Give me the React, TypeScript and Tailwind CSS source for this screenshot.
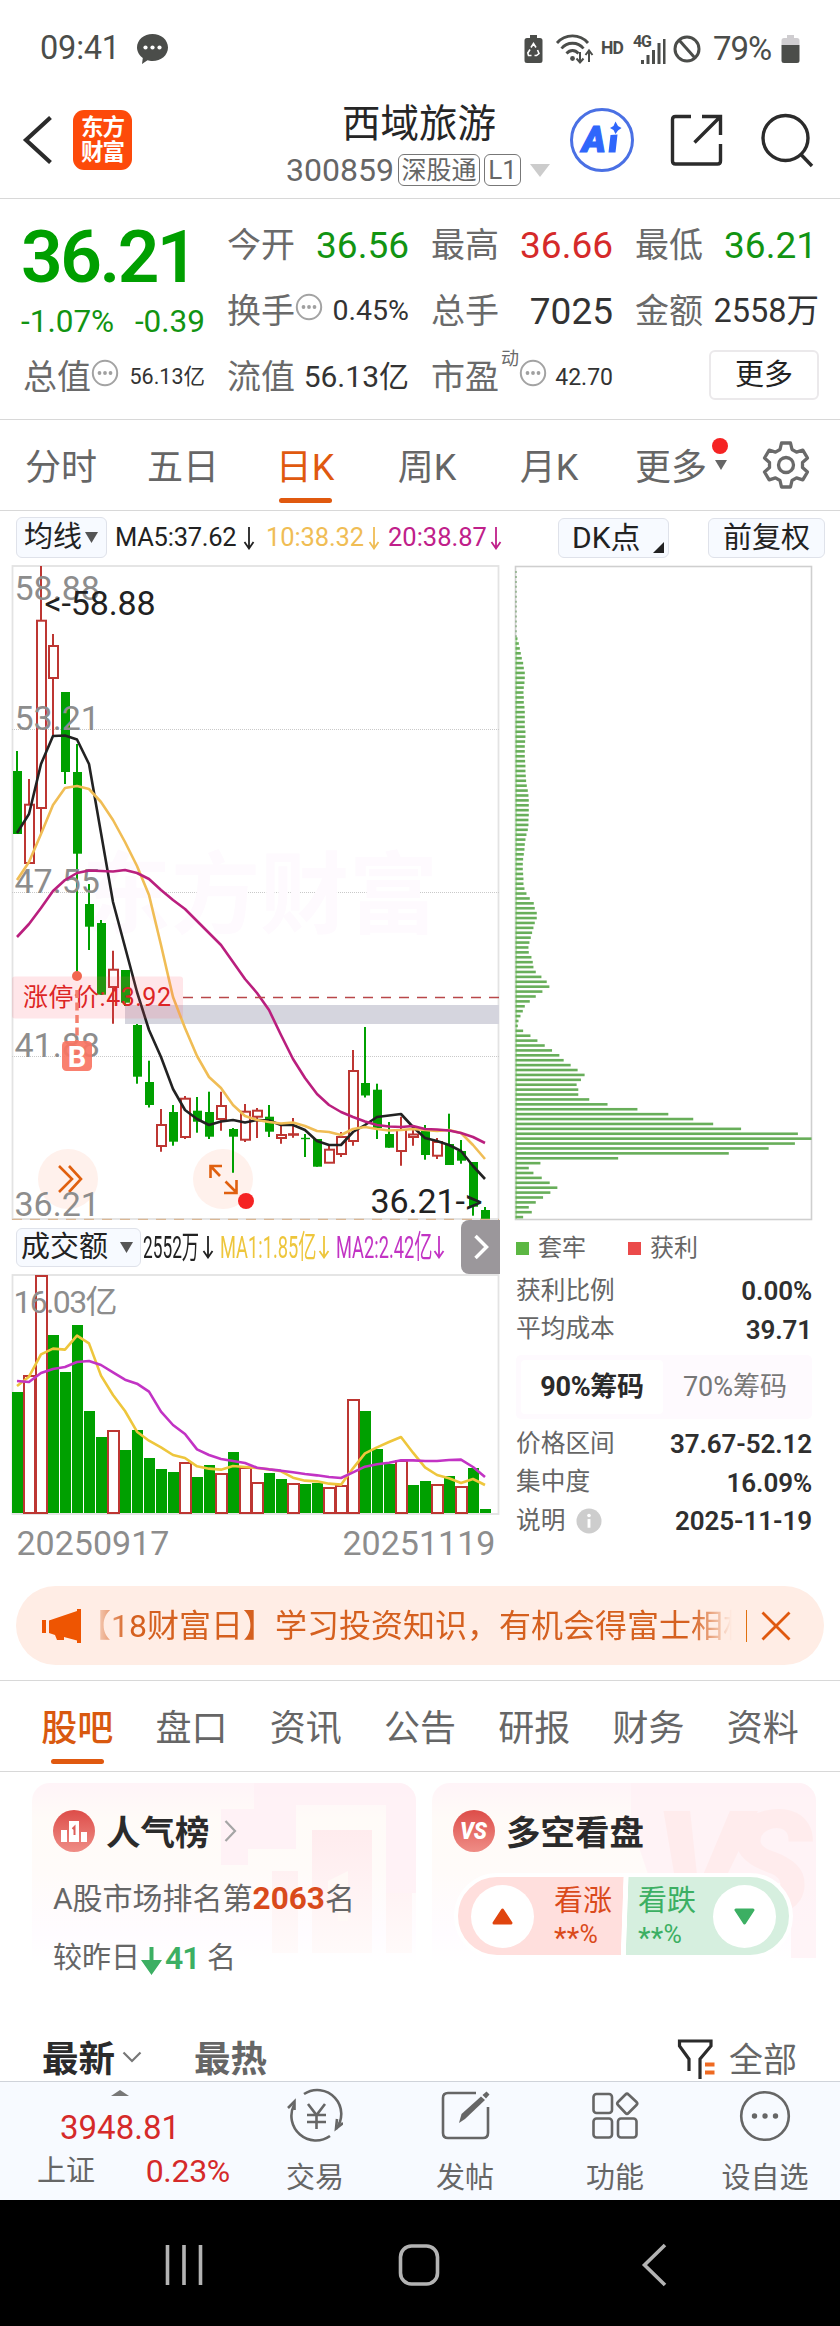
import React from "react";

type Candle = [kind: "g" | "r", high: number, top: number, bottom: number, low: number];

const X0 = 17;
const STEP = 12;

const candles: Candle[] = [
  ["g", 751, 771, 834, 834], ["r", 779, 804.7, 863, 864], ["r", 566, 620.7, 808, 833], ["r", 634, 646, 678, 735],
  ["g", 692, 692, 772, 784], ["g", 744, 772, 853.7, 976], ["g", 884, 904, 926.7, 950], ["g", 920, 923, 994.7, 994.7],
  ["r", 950.7, 969.7, 987, 1023.7], ["g", 970, 970, 1002.7, 1006], ["g", 1024, 1025, 1076.7, 1083.7], ["g", 1060.7, 1082, 1105, 1107.5],
  ["r", 1109, 1125, 1146, 1151.7], ["g", 1105, 1112, 1141.7, 1145.7], ["r", 1096, 1098.7, 1137, 1139], ["g", 1097, 1110.7, 1121.7, 1132.7],
  ["g", 1091.7, 1112, 1136.7, 1139], ["r", 1091.7, 1106, 1119, 1130.7], ["g", 1128, 1129, 1136.7, 1172.7], ["r", 1104, 1111.7, 1139.7, 1142],
  ["r", 1108, 1110.7, 1116.7, 1138], ["g", 1105, 1116.7, 1131.7, 1137], ["r", 1125, 1135, 1138, 1143.7], ["r", 1118, 1134.2, 1134.8, 1137.7],
  ["g", 1134, 1137.8, 1139.2, 1157], ["g", 1139, 1139, 1166.7, 1166.7], ["r", 1145.7, 1149.7, 1162.7, 1162.7], ["r", 1132, 1137, 1154, 1157],
  ["r", 1050, 1071, 1141, 1145.7], ["g", 1027, 1083, 1095.5, 1097.5], ["g", 1083.7, 1089.7, 1128, 1139], ["g", 1122, 1134, 1147.7, 1147.7],
  ["r", 1116.7, 1130, 1151, 1165.7], ["r", 1130, 1134.5, 1137, 1145.7], ["g", 1125, 1130, 1155, 1159.7], ["r", 1138, 1142, 1155.7, 1159],
  ["g", 1113.7, 1144, 1165, 1165], ["g", 1140, 1151, 1160.7, 1163.7], ["g", 1162, 1162, 1206.7, 1215.7], ["g", 1207, 1210, 1219, 1219],
];

const ma5 = [833, 814, 764, 736, 735.5, 739.5, 764, 833, 902, 947, 992, 1030, 1057, 1089, 1110, 1119, 1125, 1121.5, 1120, 1122.5, 1120, 1120.5, 1125, 1125, 1130, 1141, 1145, 1145, 1132, 1125, 1117, 1115.5, 1114, 1127, 1138, 1141, 1145, 1151, 1166, 1179];
const ma10 = [880, 862, 834, 805, 788, 786, 789, 802, 820, 842, 866, 895, 945, 997, 1028, 1056, 1077, 1088, 1105, 1116, 1120, 1122, 1123.5, 1122.5, 1126, 1131, 1132, 1135, 1129, 1127, 1129, 1130.5, 1130, 1129, 1130, 1131, 1130, 1133, 1145, 1159];
const ma20 = [937, 924, 908, 891, 880, 873, 870.5, 871, 871.5, 870, 873, 879, 890, 900, 909, 921, 933, 945, 962, 979, 993, 1010, 1035, 1059, 1078, 1094, 1105, 1112, 1117, 1121.5, 1125, 1126.5, 1127, 1126, 1129, 1129.5, 1130.5, 1133, 1137, 1143];

const volumes: [kind: "g" | "r", top: number][] = [
  ["g", 1392], ["r", 1375], ["r", 1275], ["g", 1335], ["g", 1372], ["g", 1325], ["g", 1411], ["g", 1437], ["r", 1430], ["g", 1450],
  ["g", 1430], ["g", 1458], ["g", 1469], ["g", 1472], ["r", 1462], ["g", 1477], ["g", 1465], ["r", 1473], ["g", 1452], ["r", 1467],
  ["r", 1482], ["g", 1473], ["g", 1479], ["r", 1483], ["g", 1484], ["g", 1483], ["r", 1487], ["r", 1485], ["r", 1399], ["g", 1411],
  ["g", 1449], ["g", 1464], ["r", 1460], ["g", 1485], ["g", 1481], ["r", 1484], ["g", 1476], ["r", 1486], ["g", 1468], ["g", 1509],
];
const vol1 = [528, 500, 433, 416, 419, 377, 400, 497, 555, 603, 665, 692, 712, 735, 744, 769, 776, 779, 768, 771, 774, 778, 784, 803, 812, 814, 821, 824, 775, 730, 712, 696, 681, 728, 772, 795, 805, 819, 807, 825].map((v) => 1210 + v / 3);
const vol2 = [513, 516, 489, 477, 471, 456, 453, 465, 487, 509, 521, 545, 605, 645, 672, 718, 735, 747, 753, 759, 773, 778, 782, 787, 792, 796, 801, 804, 787, 770, 763, 758, 751, 751, 753, 753, 750, 749, 771, 801].map((v) => 1210 + v / 3);

const chips = [53, 57, 60, 63, 66, 70, 72, 75, 75, 74, 72, 71, 72, 72, 74, 75, 75, 75, 75, 77, 77, 76, 75, 75, 75, 76, 77, 77, 78, 79, 81, 84, 86, 87, 87, 87, 87, 86, 86, 84, 80, 77, 75, 74, 72, 70, 69, 69, 70, 71, 71, 74, 80, 90, 102, 105, 111, 111, 105, 101, 97, 93, 89, 86, 87, 95, 99, 101, 108, 125, 141, 149, 128, 108, 90, 75, 69, 62, 56, 54, 70, 92, 113, 135, 157, 179, 192, 213, 234, 255, 244, 231, 236, 236, 269, 324, 414, 507, 582, 642, 726, 897, 938, 888, 809, 689, 356, 122, 87, 101, 126, 150, 173, 152, 130, 108, 87, 96, 70].map((v) => (v - 47) / 3.01);

const line = (ys: number[]) => ys.map((y, i) => `${X0 + i * STEP},${y}`).join(" ");

function PriceChart() {
  return (
    <svg className="block h-[662px] w-[500px]" viewBox="0 562 500 662" fontFamily="Roboto, 'Noto Sans CJK SC', sans-serif">
      <rect x="12.5" y="566" width="486" height="653" fill="none" stroke="#e3e3e3" strokeWidth="1.8" />
      <g stroke="#c9c9c9" strokeWidth="1" strokeDasharray="1 1">
        <path d="M12 729.5H499M12 892.5H499M12 1056.5H499" />
      </g>
      <text x="82" y="926" fontSize="89" fontWeight="700" fill="#fefafe">东方财富</text>
      <rect x="125" y="1005" width="374" height="19" fill="#d5d5de" />
      <g>
        {candles.map(([k, h, t, b, l], i) => {
          const x = X0 + i * STEP;
          return k === "g" ? (
            <g key={i} fill="#00a000">
              <rect x={x - 1} y={h} width="2" height={l - h} />
              <rect x={x - 4} y={t} width="9" height={b - t} />
            </g>
          ) : (
            <g key={i} fill="none" stroke="#bd3632" strokeWidth="2">
              <path d={`M${x} ${h}V${t}M${x} ${b}V${l}`} />
              <rect x={x - 4} y={t} width="9" height={b - t} />
            </g>
          );
        })}
      </g>
      <g fill="#8d8d8d" fontSize="34">
        <text x="14.5" y="599.5">58.88</text>
        <text x="14.5" y="730">53.21</text>
        <text x="14.5" y="892.5">47.55</text>
        <text x="14.5" y="1056.5">41.88</text>
      </g>
      <g fill="none" strokeWidth="2.6" strokeLinejoin="round">
        <polyline points={line(ma5)} stroke="#222" />
        <polyline points={line(ma10)} stroke="#f0bd55" />
        <polyline points={line(ma20)} stroke="#ba1f7e" />
      </g>
      <rect x="12" y="976.5" width="171" height="42" rx="3" fill="#ff5a6a" fillOpacity=".15" />
      <path d="M183 997.5H499" stroke="#b9474a" strokeWidth="1.4" strokeDasharray="10 8" />
      <text x="23" y="1005.5" fontSize="25" fill="#dd2525" textLength="148" lengthAdjust="spacing">涨停价:43.92</text>
      <circle cx="77" cy="976" r="5" fill="#f2664f" />
      <path d="M77 990V1041" stroke="#f4806e" strokeWidth="3.5" strokeDasharray="8 4.5" />
      <rect x="62" y="1041" width="30" height="30" rx="4.5" fill="#f97563" fillOpacity=".92" />
      <text x="77" y="1066.5" fontSize="29" fontWeight="700" textAnchor="middle" fill="#fff">B</text>
      <circle cx="68" cy="1179" r="30" fill="#fff1ec" />
      <circle cx="223" cy="1179" r="30" fill="#fff1ec" />
      <g fill="none" stroke="#e0600f" strokeWidth="2.6">
        <path d="M59 1166L72 1179L59 1192M69 1166L81 1179L69 1192" />
        <path d="M222 1166H210.500V1178M210.500 1166L220 1176M224 1193H236.500V1180M225.500 1181.500L236.500 1192.500" />
      </g>
      <path d="M233 1136V1172.7" stroke="#00a000" strokeWidth="2" />
      <circle cx="246" cy="1201" r="8" fill="#f52323" />
      <text x="14.500" y="1215.500" fontSize="34" fill="#8d8d8d">36.21</text>
      <g fill="#222" fontSize="34">
        <text x="44.500" y="614.500" textLength="111" lengthAdjust="spacing">&lt;-58.88</text>
        <text x="370.500" y="1212.500" textLength="112" lengthAdjust="spacing">36.21-&gt;</text>
      </g>
      <path d="M12 1219.300H499" stroke="#d9b795" strokeWidth="1.200" strokeDasharray="10 8" />
    </svg>
  );
}

function VolumeChart() {
  return (
    <svg className="block h-[290px] w-[500px]" viewBox="0 1274 500 290" fontFamily="Roboto, 'Noto Sans CJK SC', sans-serif">
      <rect x="12.500" y="1275" width="486" height="239" fill="none" stroke="#e3e3e3" strokeWidth="1.800" />
      {volumes.map(([k, t], i) => {
        const x = X0 + i * STEP;
        return k === "g" ? (
          <rect key={i} x={x - 5} y={t} width="11" height={1513 - t} fill="#00a000" />
        ) : (
          <rect key={i} x={x - 5} y={t + 1} width="11" height={1512 - t} fill="#fff" stroke="#bd3632" strokeWidth="2" />
        );
      })}
      <text x="13.500" y="1313" fontSize="32" fill="#8d8d8d" textLength="104" lengthAdjust="spacing">16.03亿</text>
      <g fill="none" strokeWidth="2.600" strokeLinejoin="round">
        <polyline points={line(vol1)} stroke="#eec63c" />
        <polyline points={line(vol2)} stroke="#c233c4" />
      </g>
      <g fontSize="34" fill="#8d8d8d">
        <text x="16.500" y="1555">20250917</text>
        <text x="342.500" y="1555">20251119</text>
      </g>
    </svg>
  );
}

function ChipChart() {
  return (
    <svg className="block h-[662px] w-[300px]" viewBox="513 562 300 662">
      <rect x="515.500" y="566.500" width="296" height="653" fill="none" stroke="#cfcfcf" strokeWidth="1.600" />
      <path d="M516 571V640" stroke="#8cae86" strokeWidth="1.500" strokeDasharray="2 2.940" />
      <path d="M516.300 638V1219" stroke="#b9e6ae" strokeWidth="1.500" />
      {chips.map((w, i) => (
        <rect key={i} x="515.500" y={637.300 + (i * 578.500) / (chips.length - 1)} width={w} height="2.600" fill="#68ae5a" />
      ))}
    </svg>
  );
}

const DownArrow = ({ c }: { c: string }) => (
  <svg className="h-[24px] w-[12px] shrink-0" viewBox="0 0 12 24" fill="none" stroke={c} strokeWidth="1.800">
    <path d="M6 1V22M1.500 16L6 22.500L10.500 16" />
  </svg>
);

const Dots = () => (
  <svg className="-mt-2 h-[28px] w-[28px] shrink-0" viewBox="0 0 28 28">
    <circle cx="14" cy="14" r="12.200" fill="none" stroke="#a3a3a3" strokeWidth="2" />
    <g fill="#a0a0a0"><circle cx="8.500" cy="14" r="1.900" /><circle cx="14" cy="14" r="1.900" /><circle cx="19.500" cy="14" r="1.900" /></g>
  </svg>
);

const Triangle = ({ className }: { className: string }) => (
  <svg className={className} viewBox="0 0 12 10" preserveAspectRatio="none"><path d="M0 0H12L6 10Z" fill="currentColor" /></svg>
);

function StatusBar() {
  return (
    <div className="flex h-[96px] items-center pl-[40px] pr-[40px] pt-px text-[#4b4d4a]">
      <span className="w-[96px] text-[32.500px] leading-none tracking-[-0.2px]">09:41</span>
      <svg className="h-[32px] w-[34px]" viewBox="0 0 34 32" fill="#4b4d4a">
        <path d="M16.500 1C25 1 32 6.800 32 14.500S25 28 16.500 28c-2 0-3.500-.3-5-.8L6 31l.8-6C3.500 22.500 1 18.800 1 14.500 1 6.800 8 1 16.500 1z" />
        <g fill="#fff"><circle cx="9.500" cy="14.500" r="2.100" /><circle cx="16.500" cy="14.500" r="2.100" /><circle cx="23.500" cy="14.500" r="2.100" /></g>
      </svg>
      <div className="ml-auto flex items-center">
        <svg className="h-[30px] w-[19px]" viewBox="0 0 19 30">
          <path d="M6 1h7v3h3a2.500 2.500 0 0 1 2.500 2.500v20A2.500 2.500 0 0 1 16 29H3a2.500 2.500 0 0 1-2.500-2.500v-20A2.500 2.500 0 0 1 3 4h3z" fill="#4b4d4a" />
          <path d="M7 13.500L9.500 9.500L12 13.500M13.500 16L15 19.500L12.500 21.500H10.500M7.500 21.500H4.500L3.800 19L6 15.500" fill="none" stroke="#fff" strokeWidth="1.600" />
        </svg>
        <svg className="ml-[12px] h-[32px] w-[40px]" viewBox="0 0 40 32" fill="none" stroke="#4b4d4a" strokeWidth="2.800">
          <path d="M2 10C10 .5 25 .5 33 10M6.500 15.500C12 8.500 23 8.500 28.500 15.500M11.500 20.500C15 16.500 20 16.500 23.500 20.500" />
          <circle cx="17.500" cy="25.500" r="2.400" fill="#4b4d4a" stroke="none" />
          <path d="M25 19v10M21.500 25.500L25 29.500L28.500 25.500M34 29V18M30.500 22L34 17.500L37.500 22" strokeWidth="2" />
        </svg>
        <span className="ml-[6px] w-[30px] text-[17.500px] font-bold leading-none tracking-[-0.8px]">HD</span>
        <svg className="h-[32px] w-[36px]" viewBox="0 0 36 32" fill="#4b4d4a">
          <text x="2" y="14" fontSize="16" fontWeight="700" fontFamily="Roboto, sans-serif" textLength="19" fill="#4b4d4a">4G</text>
          <path d="M10 27h3v4h-3zM15.500 22h3v9h-3zM21 17h3v14h-3zM26.500 10h3v21h-3zM32 6h2.500v25H32z" />
        </svg>
        <svg className="ml-[6px] h-[30px] w-[28px]" viewBox="0 0 28 30" fill="none" stroke="#4b4d4a" strokeWidth="3">
          <circle cx="14" cy="15" r="12" /><path d="M6 6L22 24" />
        </svg>
        <span className="ml-[12px] w-[68px] text-[33px] leading-none tracking-[-1px]">79%</span>
        <svg className="h-[30px] w-[19px]" viewBox="0 0 19 30">
          <path d="M6 1h7v3h3a2.500 2.500 0 0 1 2.500 2.500V11H.5V6.500A2.500 2.500 0 0 1 3 4h3z" fill="#cfcdd0" />
          <path d="M.5 11h18v15.500A2.500 2.500 0 0 1 16 29H3a2.500 2.500 0 0 1-2.500-2.500z" fill="#4b4d4a" />
        </svg>
      </div>
    </div>
  );
}

function Header() {
  return (
    <div className="flex h-[103px] items-start border-b border-[#d8d8d8]">
      <svg className="ml-[22px] mt-[19px] h-[50px] w-[32px]" viewBox="0 0 32 50" fill="none" stroke="#2b2b2b" strokeWidth="4.200"><path d="M28.500 2.500L4 25L28.500 47.500" /></svg>
      <div className="ml-[19px] mt-[14px] flex h-[60px] w-[59px] flex-col items-center justify-center rounded-[11px] bg-[#fd4a0a] text-[22.500px] font-bold leading-[25px] tracking-[-1px] text-white">
        <span>东方</span><span>财富</span>
      </div>
      <div className="ml-[154px] mt-[6px] flex w-[264px] flex-col">
        <div className="pl-[56px] text-[38.500px] leading-[44px] text-[#262626]">西域旅游</div>
        <div className="mt-[8px] flex h-[32px] items-center text-[#666]">
          <span className="w-[112px] text-[32px] leading-none">300859</span>
          <span className="flex h-[32px] w-[82px] items-center justify-center rounded-[6px] border-[1.5px] border-[#777] text-[25px] leading-none">深股通</span>
          <span className="ml-[4px] flex h-[32px] w-[37px] items-center justify-center rounded-[6px] border-[1.5px] border-[#777] text-[26px] leading-none">L1</span>
          <Triangle className="ml-[9px] h-[13px] w-[20px] text-[#ccc]" />
        </div>
      </div>
      <svg className="ml-[19px] mt-[11px] h-[66px] w-[66px]" viewBox="0 0 66 66">
        <circle cx="33" cy="33" r="30.500" fill="none" stroke="#4a70e4" strokeWidth="3" />
        <text x="13" y="45" fontSize="36" fontWeight="900" fontStyle="italic" fontFamily="Roboto, sans-serif" fill="#2f66fb" stroke="#2f66fb" strokeWidth="1.200">A</text>
        <path d="M41.500 28L48.500 27.500L46.500 45.500H39.500ZM46.500 14.500L49 19L52.500 21L49 23.500L46.500 27L44.500 23L41 21L44.500 19Z" fill="#2f66fb" />
      </svg>
      <svg className="ml-[34px] mt-[17px] h-[54px] w-[56px]" viewBox="0 0 56 54" fill="none" stroke="#2b2b2b" strokeWidth="3.400">
        <path d="M22 3.500H6.500Q3.500 3.500 3.500 6.500V48Q3.500 51 6.500 51H48.500Q51.500 51 51.500 48V31M33 3.500H51.500V22M51.500 3.500L25.500 29.500" />
      </svg>
      <svg className="ml-[35px] mt-[16px] h-[56px] w-[56px]" viewBox="0 0 56 56" fill="none" stroke="#2b2b2b" strokeWidth="3.400">
        <circle cx="25.500" cy="26" r="22.500" /><path d="M40.500 42L52 54" />
      </svg>
    </div>
  );
}

function Quote({ label, value, className, icon, sup }: { label: string; value: string; className: string; icon?: boolean; sup?: string }) {
  return (
    <div className="flex h-[66px] w-[182px] items-center leading-none">
      <span className="w-[68px] shrink-0 text-[34px] text-[#6a6a6a]">{label}</span>
      {sup && <span className="-mt-[36px] ml-[2px] w-[18px] text-[18px] text-[#6a6a6a]">{sup}</span>}
      {icon && <Dots />}
      <span className={"ml-auto whitespace-nowrap " + className}>{value}</span>
    </div>
  );
}

function QuotePanel() {
  return (
    <div className="flex h-[221px] gap-[22px] border-b border-[#d8d8d8] pl-[23px] pt-[13px]">
      <div className="w-[182px]">
        <div className="-ml-[2px] flex h-[88px] items-center pt-[3px] text-[73px] font-semibold leading-none tracking-[-2.500px] text-[#009f00]">36.21</div>
        <div className="-ml-[2px] flex h-[44px] w-[184px] items-center justify-between whitespace-nowrap text-[31.500px] leading-none text-[#129412]"><span>-1.07%</span><span>-0.39</span></div>
        <Quote label="总值" value="56.13亿" icon className="text-[21.500px] text-[#333]" />
      </div>
      <div className="w-[182px]">
        <Quote label="今开" value="36.56" className="text-[37px] text-[#129412]" />
        <Quote label="换手" value="0.45%" icon className="text-[28.500px] text-[#333]" />
        <Quote label="流值" value="56.13亿" className="text-[30px] text-[#333]" />
      </div>
      <div className="w-[182px]">
        <Quote label="最高" value="36.66" className="text-[37px] text-[#d52a2a]" />
        <Quote label="总手" value="7025" className="text-[37px] text-[#333]" />
        <Quote label="市盈" sup="动" value="42.70" icon className="text-[23px] text-[#333]" />
      </div>
      <div className="w-[182px]">
        <Quote label="最低" value="36.21" className="text-[37px] text-[#129412]" />
        <Quote label="金额" value="2558万" className="-mr-[2px] text-[32.500px] text-[#333]" />
        <div className="ml-[74px] mt-[6px] flex h-[50px] w-[110px] items-center justify-center rounded-[6px] border-2 border-[#ebe9eb] text-[29px] leading-none text-[#222]">更多</div>
      </div>
    </div>
  );
}

function PeriodTabs() {
  return (
    <div className="flex h-[91px] border-b border-[#d8d8d8]">
      {["分时", "五日", "日K", "周K", "月K", "更多"].map((t) => (
        <div key={t} className={"relative flex w-[122px] justify-center pt-[30px] text-[36px] leading-none " + (t === "日K" ? "text-[#e0590f]" : "text-[#666]")}>
          {t}
          {t === "日K" && <span className="absolute bottom-[7px] h-[5px] w-[53px] rounded-full bg-[#e0590f]" />}
          {t === "更多" && <span className="absolute right-[4px] top-[18px] size-[16px] rounded-full bg-[#f52323]" />}
          {t === "更多" && <Triangle className="absolute right-[5px] top-[40px] h-[10px] w-[12px]" />}
        </div>
      ))}
      <svg className="ml-[29px] mt-[20px] h-[50px] w-[50px]" viewBox="0 0 50 50" fill="none" stroke="#6a6a6a" strokeWidth="3.300" strokeLinejoin="round">
        <path d="M20.500 3h9l1.500 6.500 4.500 2.600 6.300-2 4.700 7.900-5 4.500v5l5 4.500-4.700 7.900-6.300-2-4.500 2.600L29.500 47h-9L19 40.500l-4.500-2.600-6.300 2L3.500 32l5-4.500v-5L3.500 18l4.700-7.900 6.300 2L19 9.500z" />
        <circle cx="25" cy="25" r="7.500" />
      </svg>
    </div>
  );
}

const btn = "flex items-center rounded-[6px] border border-[#dfe2ea] bg-[#f7faff] leading-none text-[#222]";

function Indicators() {
  return (
    <div className="flex h-[51px] items-start pl-[16px] pt-[6px]">
      <div className={btn + " h-[41px] w-[91px] pl-[7px] text-[29px]"}>均线<Triangle className="ml-[3px] h-[11px] w-[13px] text-[#555]" /></div>
      <div className="ml-[8px] flex h-[41px] items-center text-[25.500px] leading-none">
        <span className="w-[128px] tracking-[-0.250px] text-[#222]">MA5:37.62</span><DownArrow c="#222" />
        <span className="ml-[11px] w-[102px] tracking-[-0.100px] text-[#f0bd55]">10:38.32</span><DownArrow c="#f0bd55" />
        <span className="ml-[8px] w-[102px] text-[#c0208a]">20:38.87</span><DownArrow c="#c0208a" />
      </div>
      <div className={btn + " relative ml-[56px] mt-[1px] h-[40px] w-[111px] pl-[13px] text-[30px]"}>DK点
        <svg className="absolute bottom-[4px] right-[4px] size-[11px]" viewBox="0 0 11 11"><path d="M11 0V11H0Z" fill="#222" /></svg>
      </div>
      <div className={btn + " ml-[39px] mt-[1px] h-[40px] w-[117px] pl-[14px] text-[29px]"}>前复权</div>
    </div>
  );
}

const Squeezed = ({ w, className, children }: { w: string; className: string; children: string }) => (
  <div className={w + " shrink-0"}><span className={"block w-max origin-left whitespace-nowrap text-[32px] leading-none " + className}>{children}</span></div>
);

function VolumeLegend() {
  return (
    <div className="flex h-[50px] w-[500px] items-center pl-[16px]">
      <div className={btn + " h-[39px] w-[125px] shrink-0 pl-[4px] text-[29px]"}>成交额<Triangle className="ml-[12px] h-[11px] w-[13px] text-[#555]" /></div>
      <Squeezed w="ml-[2px] w-[59px]" className="scale-x-[0.54] text-[#222]">2552万</Squeezed>
      <DownArrow c="#222" />
      <Squeezed w="ml-[6px] w-[98px]" className="scale-x-[0.57] text-[#eec63c]">MA1:1.85亿</Squeezed>
      <DownArrow c="#eec63c" />
      <Squeezed w="ml-[6px] w-[97px]" className="scale-x-[0.57] text-[#c233c4]">MA2:2.42亿</Squeezed>
      <DownArrow c="#c233c4" />
      <div className="-my-[3px] ml-auto flex h-[54px] w-[39px] shrink-0 items-center justify-center rounded-l-[8px] bg-[#9b979b]">
        <svg className="h-[26px] w-[16px]" viewBox="0 0 16 26" fill="none" stroke="#fff" strokeWidth="3.500"><path d="M2.500 2L13.500 13L2.500 24" /></svg>
      </div>
    </div>
  );
}

const Stat = ({ label, value, info }: { label: string; value: string; info?: boolean }) => (
  <div className="flex h-[38.500px] items-center leading-none">
    <span className="text-[24.700px] text-[#666]">{label}</span>
    {info && (
      <svg className="ml-[11px] size-[26px]" viewBox="0 0 27 27"><circle cx="13.500" cy="13.500" r="13" fill="#cdcdcd" /><circle cx="13.500" cy="7.800" r="1.900" fill="#fff" /><path d="M13.500 11.500V20.500" stroke="#fff" strokeWidth="3" /></svg>
    )}
    <span className="ml-auto text-[26px] font-semibold tracking-[-0.100px] text-[#2f2f2f]">{value}</span>
  </div>
);

function ChipPanel() {
  return (
    <div className="ml-[13px] w-[300px]">
      <ChipChart />
      <div className="pl-[3px] pr-[1px]">
        <div className="mt-[5px] flex h-[38px] items-center text-[24px] leading-none text-[#666]">
          <span className="size-[13px] bg-[#5cb743]" /><span className="ml-[9px]">套牢</span>
          <span className="ml-[42px] size-[13px] bg-[#eb4a4a]" /><span className="ml-[9px]">获利</span>
        </div>
        <div className="mt-[5px]"><Stat label="获利比例" value="0.00%" /><Stat label="平均成本" value="39.71" /></div>
        <div className="mt-[6px] flex h-[64px] rounded-[5px] bg-[#fefafe] p-[5px] text-[27px] leading-none">
          <span className="flex w-[142px] items-center justify-center rounded-[4px] bg-white font-bold tracking-[-0.300px] text-[#2a2a2a]">90%筹码</span>
          <span className="flex flex-1 items-center justify-center text-[#777]">70%筹码</span>
        </div>
        <div className="mt-[6px]"><Stat label="价格区间" value="37.67-52.12" /><Stat label="集中度" value="16.09%" /><Stat label="说明" value="2025-11-19" info /></div>
      </div>
    </div>
  );
}

function Banner() {
  return (
    <div className="mx-[16px] flex h-[79px] items-center rounded-full bg-[#ffede5] pl-[25px]">
      <svg className="h-[36px] w-[42px]" viewBox="0 0 42 36" fill="#ee5502"><path d="M1 12h4v13H1zM8 12.500L36 3V1h4v34h-4v-2.500L23 29v3h-7l-2-5-6-2z" /></svg>
      <div className="ml-[13px] w-[636px] overflow-hidden whitespace-nowrap pt-px text-[32px] leading-[44px] text-[#d5601f] [mask-image:linear-gradient(to_right,rgba(0,0,0,.2),#000_32px,#000_595px,transparent)]">
        <span className="-ml-[17px] inline-block">【18财富日】学习投资知识，有机会得富士相机</span>
      </div>
      <span className="ml-[14px] h-[32px] w-px bg-[#e0700f]" />
      <svg className="ml-[14px] size-[30px]" viewBox="0 0 30 30" stroke="#e0590f" strokeWidth="2.800"><path d="M1.500 1.500L28.500 28.500M28.500 1.500L1.500 28.500" /></svg>
    </div>
  );
}

function SectionTabs() {
  return (
    <div className="mt-[15px] flex h-[92px] border-y border-[#d8d8d8] px-[20px]">
      {["股吧", "盘口", "资讯", "公告", "研报", "财务", "资料"].map((t, i) => (
        <div key={t} className={"relative flex flex-1 justify-center pt-[30px] text-[36px] leading-none " + (i === 0 ? "font-medium text-[#d9590f]" : "text-[#666]")}>
          {t}{i === 0 && <span className="absolute bottom-[7px] h-[5px] w-[53px] rounded-full bg-[#e0590f]" />}
        </div>
      ))}
    </div>
  );
}

const card = "relative h-[230px] w-[384px] overflow-hidden rounded-t-[18px] bg-[linear-gradient(to_bottom,#fff4f8,#fffbf8_35px,#fffbf9_90px,#fffcff_150px,#fff_180px)] pl-[21px]";

function RankCard() {
  return (
    <div className={card}>
      <svg className="absolute right-0 top-0 h-[175px] w-[230px]" viewBox="0 0 230 175">
        <defs><linearGradient id="fadeRank" x1="0" y1="0" x2="0" y2="1"><stop stopColor="#ffecee" /><stop offset="1" stopColor="#fffafa" /></linearGradient></defs>
        <path d="M68 0H230V110H200V22H110V66H62V82H35V26H68Z" fill="#fff0f5" fillOpacity=".8" />
        <path d="M86 88H112V170H86ZM126 47H186V170H126ZM200 110H226V170H200Z" fill="url(#fadeRank)" />
        <path d="M142 98L162 88V138H152V108L142 112Z" fill="#fff9f6" />
      </svg>
      <div className="relative flex h-[95px] items-center">
        <svg className="size-[42px]" viewBox="0 0 42 42">
          <defs><linearGradient id="rankDot" x1="0" y1="0" x2="0" y2="1"><stop stopColor="#dd4d49" /><stop offset="1" stopColor="#ef8d86" /></linearGradient></defs>
          <circle cx="21" cy="21" r="21" fill="url(#rankDot)" />
          <path d="M8 20h6v12H8zM16 11h10v21H16zM28 22h6v10h-6z" fill="#fff" /><path d="M19.500 19L21.500 17V25" fill="none" stroke="#dd5d58" strokeWidth="2" />
        </svg>
        <span className="ml-[11px] pt-[5px] text-[34.500px] font-bold leading-none text-[#2b2b2b]">人气榜</span>
        <svg className="ml-[14px] h-[22px] w-[13px]" viewBox="0 0 13 22" fill="none" stroke="#a5a5a5" strokeWidth="2.200"><path d="M1.500 1L11 11L1.500 21" /></svg>
      </div>
      <div className="relative -mt-[3px] flex h-[48px] items-center text-[30px] leading-none text-[#666]">A股市场排名第<b className="text-[31.500px] text-[#d94a1b]">2063</b>名</div>
      <div className="relative mt-[13px] flex h-[44px] items-center text-[29px] leading-none text-[#666]">较昨日
        <svg className="ml-px mt-[6px] h-[30px] w-[21px]" viewBox="0 0 21 30" fill="#3caf63"><path d="M8.500 1h4v13H21L10.500 29L0 14h8.500z" /></svg>
        <span className="ml-[3px] w-[42px] text-[32px] font-semibold tracking-[-1px] text-[#3caf63]">41</span>名
      </div>
    </div>
  );
}

const Percent = () => (
  <div className="flex items-center text-[25px] leading-[38px]"><span className="pt-[6px] text-[29px] leading-none tracking-[0.200px]">**</span>%</div>
);

function VersusCard() {
  return (
    <div className={card}>
      <svg className="absolute right-0 top-0 h-[175px] w-[190px]" viewBox="0 0 190 175">
        <path d="M5 0H190V175H165V100H25L5 40Z" fill="#fff1f5" fillOpacity=".8" />
        <text x="28" y="132" fontSize="146" fontWeight="900" fontStyle="italic" fontFamily="Roboto, sans-serif" textLength="158" lengthAdjust="spacing" fill="#ffeced">VS</text>
      </svg>
      <div className="relative flex h-[95px] items-center">
        <svg className="size-[42px]" viewBox="0 0 42 42">
          <circle cx="21" cy="21" r="21" fill="url(#rankDot)" />
          <text x="7" y="29" fontSize="24" fontWeight="900" fontStyle="italic" fontFamily="Roboto, sans-serif" textLength="27" lengthAdjust="spacingAndGlyphs" fill="#fff">VS</text>
        </svg>
        <span className="ml-[11px] pt-[5px] text-[34.500px] font-bold leading-none text-[#2b2b2b]">多空看盘</span>
      </div>
      <div className="relative -mt-[5px] ml-[1px] flex h-[86px] w-[339px] overflow-hidden rounded-full border-[4px] border-white bg-[linear-gradient(92deg,#ffdfdd_49.500%,#fff_49.700%,#fff_51%,#d6efdf_51.200%)]">
        <div className="ml-[13px] mt-[8px] flex size-[63px] items-center justify-center rounded-full bg-white">
          <svg className="h-[17px] w-[21px]" viewBox="0 0 21 17"><path d="M10.500 2L19 15H2Z" fill="#e0450f" stroke="#e0450f" strokeWidth="3" strokeLinejoin="round" /></svg>
        </div>
        <div className="ml-[20px] mt-[9px] w-[84px] text-[29px] leading-[30px] text-[#da4a1b]">看涨<Percent /></div>
        <div className="mt-[9px] w-[75px] text-[29px] leading-[30px] text-[#3caf63]">看跌<Percent /></div>
        <div className="mt-[8px] flex size-[63px] items-center justify-center rounded-full bg-white">
          <svg className="h-[17px] w-[21px]" viewBox="0 0 21 17"><path d="M10.500 15L2 2H19Z" fill="#3caf63" stroke="#3caf63" strokeWidth="3" strokeLinejoin="round" /></svg>
        </div>
      </div>
    </div>
  );
}

function SortRow() {
  return (
    <div className="flex h-[69px] items-center border-b border-[#cfd3da] pl-[42px] pt-[26px] leading-none">
      <span className="text-[36.500px] font-bold text-[#2b2b2b]">最新</span>
      <svg className="-mt-[6px] ml-[7px] h-[12px] w-[20px]" viewBox="0 0 20 12" fill="none" stroke="#777" strokeWidth="2.200"><path d="M1.500 1.500L10 10L18.500 1.500" /></svg>
      <span className="ml-[52px] text-[36.500px] font-bold text-[#666]">最热</span>
      <svg className="-mt-[3px] ml-auto h-[42px] w-[40px]" viewBox="0 0 40 42" fill="none" stroke="#2b2b2b" strokeWidth="3.200">
        <path d="M12 33V21L2.500 8V3H34V8L23 21V41" />
        <path d="M28 26.500h9.500M28 34.500h9.500" stroke="#ee6a22" strokeWidth="4" />
      </svg>
      <span className="ml-[12px] mr-[43px] text-[34px] text-[#666]">全部</span>
    </div>
  );
}

const tools = [
  { label: "交易", icon: (
    <><path d="M17 6A24 24 0 0 1 49 41M7 17A24.500 24.500 0 0 0 43 48" /><path d="M1 20L7.500 13.500V22M50 31L49 40.500L56 35" /><path d="M21 16L29.500 27L38 16M29.500 27V41M20 27H39M20 34H39" /></>
  ) },
  { label: "发帖", icon: (
    <><path d="M39 5H11Q6 5 6 10V45Q6 50 11 50H46Q51 50 51 45V19" /><path d="M22 35L24.500 26L44 8.500L48 12L28 31Z" fill="#666" stroke="none" /><path d="M45.500 7L49.500 3.500L52.500 6.500L49 10.500Z" fill="#666" stroke="none" /></>
  ) },
  { label: "功能", icon: (
    <><rect x="6.500" y="6" width="18.500" height="19" rx="3" /><rect x="6.500" y="30.500" width="18.500" height="19" rx="3" /><rect x="31" y="30.500" width="18.500" height="19" rx="3" /><path d="M38.500 6.500Q40 5 41.500 6.500L49.500 14Q51 15.500 49.500 17L41.500 25Q40 26.500 38.500 25L31 17Q29.500 15.500 31 14Z" /></>
  ) },
  { label: "设自选", icon: (
    <><circle cx="28" cy="28" r="23.800" /><g fill="#666" stroke="none"><circle cx="17.500" cy="28" r="2.700" /><circle cx="28" cy="28" r="2.700" /><circle cx="38.500" cy="28" r="2.700" /></g></>
  ) },
];

function BottomBar() {
  return (
    <div className="flex h-[118px] bg-[#f7faff]">
      <div className="flex w-[240px] flex-col items-center leading-none">
        <svg className="mt-[8px] h-[6px] w-[18px]" viewBox="0 0 18 6"><path d="M9 0L18 6H0Z" fill="#777" /></svg>
        <span className="mt-[15px] text-[33px] text-[#d52a2a]">3948.81</span>
        <div className="ml-[27px] mt-[11px] flex w-[193px] items-center justify-between"><span className="text-[29px] text-[#666]">上证</span><span className="text-[32px] tracking-[-0.300px] text-[#d52a2a]">0.23%</span></div>
      </div>
      {tools.map((t) => (
        <div key={t.label} className="flex w-[150px] flex-col items-center">
          <svg className="mt-[6px] size-[56px]" viewBox="0 0 56 56" fill="none" stroke="#666" strokeWidth="2.600">{t.icon}</svg>
          <span className="mt-[20px] text-[29px] leading-none text-[#666]">{t.label}</span>
        </div>
      ))}
    </div>
  );
}

function SystemNav() {
  return (
    <div className="h-[126px] bg-black">
      <svg className="block h-[126px] w-[840px]" viewBox="0 0 840 126" fill="none" stroke="#b3b3b3" strokeWidth="3.600">
        <path d="M167.500 45V85M184 45V85M200.500 45V85" />
        <rect x="400.500" y="46" width="37" height="38" rx="11" />
        <path d="M665 45L644.500 65L665 85" />
      </svg>
    </div>
  );
}

export default function App() {
  return (
    <div className="flex h-[2326px] w-[840px] flex-col overflow-hidden bg-white font-[Roboto,'Noto_Sans_CJK_SC',sans-serif]">
      <StatusBar />
      <Header />
      <QuotePanel />
      <PeriodTabs />
      <Indicators />
      <div className="flex h-[1024px] items-start">
        <div className="w-[500px]">
          <PriceChart />
          <div className="-mt-[2px]"><VolumeLegend /></div>
          <div className="mt-[2px]"><VolumeChart /></div>
        </div>
        <ChipPanel />
      </div>
      <Banner />
      <SectionTabs />
      <div className="flex h-[241px] gap-[16px] pl-[32px] pt-[11px]">
        <RankCard />
        <VersusCard />
      </div>
      <SortRow />
      <BottomBar />
      <SystemNav />
    </div>
  );
}
